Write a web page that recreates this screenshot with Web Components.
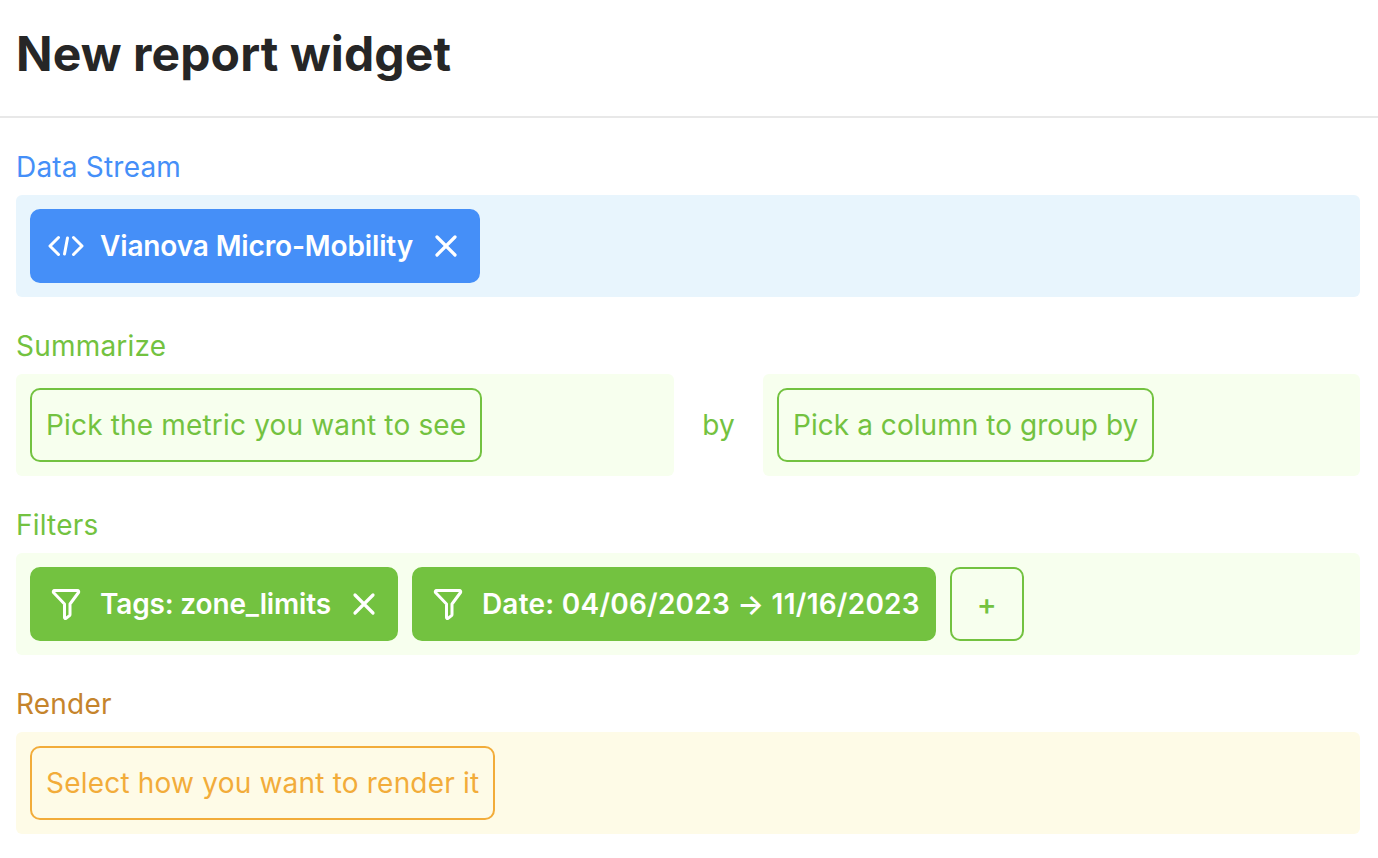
<!DOCTYPE html>
<html lang="en">
<head>
<meta charset="utf-8">
<title>New report widget</title>
<style>
    html, body { margin: 0; background: #ffffff; }
    body { font-family: Inter, "Liberation Sans", sans-serif; }
</style>
</head>
<body>
<report-builder>
    <report-section label="Data Stream" tone="blue">
        <report-panel tone="blue">
            <report-chip tone="blue" icon="code" removable style="letter-spacing:-0.14px">Vianova Micro-Mobility</report-chip>
        </report-panel>
    </report-section>
    <report-section label="Summarize" tone="green">
        <div style="display:grid;grid-template-columns:658fr 89px 597fr;align-items:center">
            <report-panel tone="green"><report-chip tone="green" outline style="letter-spacing:0.17px">Pick the metric you want to see</report-chip></report-panel>
            <div style="text-align:center;font-size:28px;color:#73c240;font-weight:400">by</div>
            <report-panel tone="green"><report-chip tone="green" outline style="letter-spacing:0.05px">Pick a column to group by</report-chip></report-panel>
        </div>
    </report-section>
    <report-section label="Filters" tone="green">
        <report-panel tone="green">
            <report-chip tone="green" icon="filter" removable style="letter-spacing:-0.17px">Tags: zone_limits</report-chip>
            <report-chip tone="green" icon="filter" style="letter-spacing:0.24px">Date: 04/06/2023 → 11/16/2023</report-chip>
            <report-chip tone="green" outline square>+</report-chip>
        </report-panel>
    </report-section>
    <report-section label="Render" tone="orange">
        <report-panel tone="orange">
            <report-chip tone="orange" outline style="letter-spacing:0.2px">Select how you want to render it</report-chip>
        </report-panel>
    </report-section>
</report-builder>

<script>
const TONES = {
    blue: { main: '#458ff8', label: '#458ff8', soft: '#e8f5fd' },
    green: { main: '#73c240', label: '#73c240', soft: '#f7ffee' },
    orange: { main: '#f2ac3a', label: '#c5842c', soft: '#fefbe7' }
};

const ICONS = {
    code: '<svg width="36" height="24" viewBox="0 0 36 24" fill="none" stroke="currentColor" stroke-width="3" stroke-linecap="round" stroke-linejoin="round"><path d="M10.500 3.500 2 12l8.500 8.500"/><path d="M25.500 3.500 34 12l-8.500 8.500"/><path d="M19.500 4 16.500 20"/></svg>',
    filter: '<svg width="36" height="32" viewBox="0 0 36 32" fill="none" stroke="currentColor" stroke-width="3" stroke-linecap="round" stroke-linejoin="round"><path d="M6.500 2.500h23c1 0 1.500 1 1 2L22 16v10.500c0 .5-.2.800-.5 1.100l-3.500 2.800c-.7.500-1.500 0-1.500-.8V16L5.500 4.500c-.5-1 0-2 1-2z"/></svg>',
    close: '<svg width="24" height="24" viewBox="0 0 24 24" fill="none" stroke="currentColor" stroke-width="3.200" stroke-linecap="round"><path d="M3 3l18 18M21 3 3 21"/></svg>'
};

class ReportBuilder extends HTMLElement {
    constructor() {
        super();
        this.attachShadow({ mode: 'open' });
        this.shadowRoot.innerHTML = `
            <style>
                :host { display: block; }
                header {
                    height: 106px;
                    padding: 0 0 10px 16px;
                    border-bottom: 2px solid #e8e8e8;
                    display: flex;
                    align-items: center;
                }
                h1 {
                    margin: 0;
                    font-size: 48px;
                    font-weight: 700;
                    letter-spacing: 0.1px;
                    color: #262626;
                }
                main {
                    padding: 28px 18px 0 16px;
                    display: flex;
                    flex-direction: column;
                    gap: 28px;
                }
            </style>
            <header><h1>New report widget</h1></header>
            <main><slot></slot></main>
        `;
    }
}

class ReportSection extends HTMLElement {
    constructor() {
        super();
        this.attachShadow({ mode: 'open' });
    }

    connectedCallback() {
        const tone = TONES[this.getAttribute('tone')];
        this.shadowRoot.innerHTML = `
            <style>
                :host { display: block; }
                .label {
                    height: 49px;
                    font-size: 28px;
                    letter-spacing: 0.2px;
                    line-height: 43px;
                    color: ${tone.label};
                }
            </style>
            <div class="label">${this.getAttribute('label')}</div>
            <slot></slot>
        `;
    }
}

class ReportPanel extends HTMLElement {
    constructor() {
        super();
        this.attachShadow({ mode: 'open' });
    }

    connectedCallback() {
        const tone = TONES[this.getAttribute('tone')];
        this.shadowRoot.innerHTML = `
            <style>
                :host {
                    display: flex;
                    gap: 14px;
                    height: 102px;
                    box-sizing: border-box;
                    padding: 14px;
                    border-radius: 6px;
                    background: ${tone.soft};
                }
            </style>
            <slot></slot>
        `;
    }
}

class ReportChip extends HTMLElement {
    constructor() {
        super();
        this.attachShadow({ mode: 'open' });
    }

    connectedCallback() {
        const tone = TONES[this.getAttribute('tone')];
        const outline = this.hasAttribute('outline');
        const square = this.hasAttribute('square');
        const icon = this.getAttribute('icon');
        this.shadowRoot.innerHTML = `
            <style>
                :host {
                    display: inline-flex;
                    align-items: center;
                    height: 74px;
                    box-sizing: border-box;
                    padding: 0 14px 0 ${icon ? 16 : 14}px;
                    ${square ? 'width: 74px; justify-content: center; padding: 0;' : ''}
                    border-radius: 10px;
                    font-size: ${square ? 30 : 28}px;
                    font-weight: ${square ? 500 : outline ? 400 : 600};
                    white-space: nowrap;
                    color: ${outline ? tone.main : '#ffffff'};
                    background: ${outline ? 'transparent' : tone.main};
                    border: 2px solid ${tone.main};
                }
                .icon { display: flex; margin-right: 16px; }
                .close { display: flex; margin-left: 21px; margin-right: 6px; }
            </style>
            ${icon ? `<span class="icon">${ICONS[icon]}</span>` : ''}
            <slot></slot>
            ${this.hasAttribute('removable') ? `<span class="close">${ICONS.close}</span>` : ''}
        `;
    }
}

customElements.define('report-builder', ReportBuilder);
customElements.define('report-section', ReportSection);
customElements.define('report-panel', ReportPanel);
customElements.define('report-chip', ReportChip);
</script>
</body>
</html>
